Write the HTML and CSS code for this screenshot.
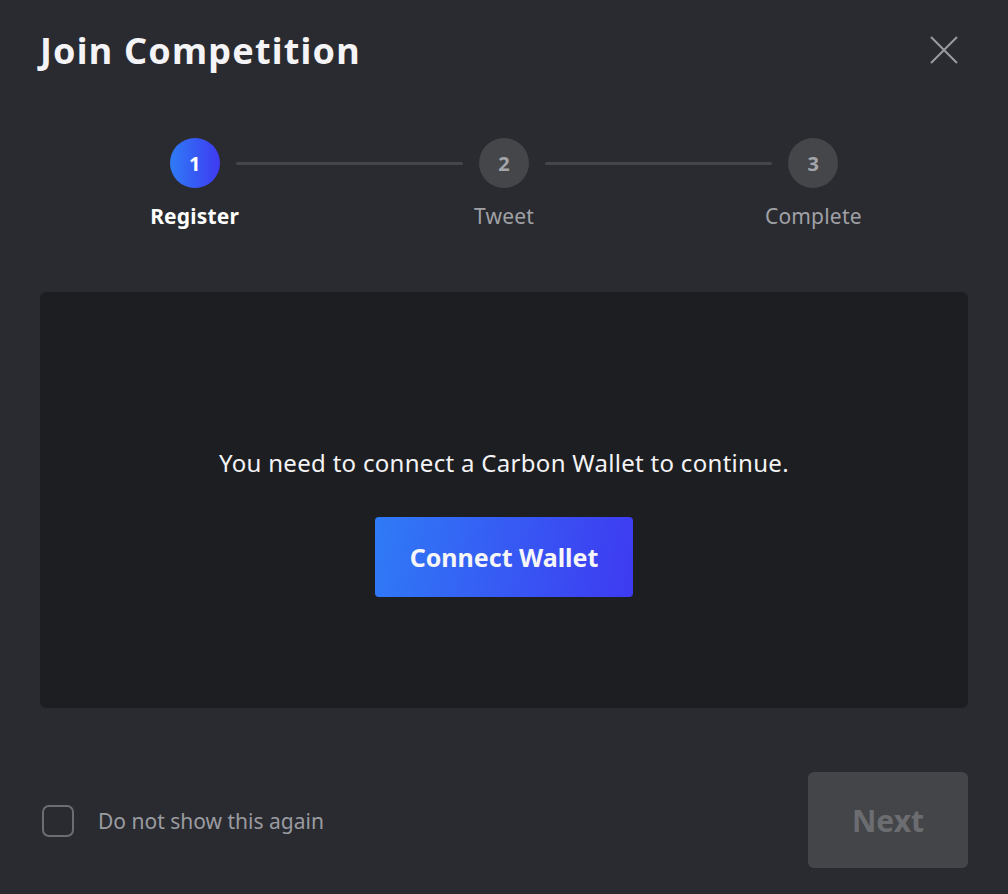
FILE: index.html
```html
<!DOCTYPE html>
<html lang="en">
<head>
<meta charset="utf-8">
<title>Join Competition</title>
<link rel="stylesheet" href="styles.css">
</head>
<body>
<div class="modal">
  <header class="header">
    <h1 class="title">Join Competition</h1>
    <button class="close" aria-label="Close">
      <svg width="28" height="28" viewBox="0 0 28 28"><path d="M1 1L27 27M27 1L1 27" stroke="#9a9ba0" stroke-width="2" fill="none"/></svg>
    </button>
  </header>
  <ol class="stepper">
    <li class="step active"><span class="dot">1</span><span class="label">Register</span></li>
    <li class="step"><span class="dot">2</span><span class="label">Tweet</span></li>
    <li class="step last"><span class="dot">3</span><span class="label">Complete</span></li>
  </ol>
  <section class="panel">
    <p class="msg">You need to connect a Carbon Wallet to continue.</p>
    <button class="connect">Connect Wallet</button>
  </section>
  <footer class="footer">
    <label class="check"><span class="box"></span><span class="check-text">Do not show this again</span></label>
    <button class="next" disabled>Next</button>
  </footer>
</div>
</body>
</html>
```
FILE: styles.css
```css
* { box-sizing: border-box; }
html, body { margin: 0; height: 100%; }
body {
  background: #2a2b30;
  font-family: "Noto Sans", "DejaVu Sans", sans-serif;
  color: #f4f4f6;
}
.modal {
  display: flex;
  flex-direction: column;
  padding: 24px 40px 26px;
  height: 894px;
}
.header {
  display: flex;
  align-items: center;
  justify-content: space-between;
  height: 52px;
}
.title {
  margin: 0;
  font-size: 36px;
  font-weight: 700;
  letter-spacing: 1.2px;
  color: #f4f4f6;
}
.close {
  background: none;
  border: 0;
  padding: 0;
  width: 28px;
  height: 28px;
  margin-right: 10px;
  cursor: pointer;
}
.close svg { display: block; }
.stepper {
  list-style: none;
  margin: 62px 0 0;
  padding: 0;
  display: grid;
  grid-template-columns: repeat(3, 1fr);
}
.step {
  position: relative;
  display: flex;
  flex-direction: column;
  align-items: center;
}
.step:not(.last)::after {
  content: "";
  position: absolute;
  top: 24px;
  left: calc(50% + 41px);
  right: calc(-50% + 41px);
  height: 3px;
  border-radius: 2px;
  background: #45464b;
}
.dot {
  width: 50px;
  height: 50px;
  border-radius: 50%;
  background: #45464a;
  color: #a4a5aa;
  display: flex;
  align-items: center;
  justify-content: center;
  font-weight: 700;
  font-size: 20px;
}
.active .dot {
  background: linear-gradient(90deg, #2f7bf6, #3e3af1);
  color: #fff;
}
.label {
  margin-top: 14px;
  font-size: 21px;
  line-height: 28px;
  letter-spacing: 0.2px;
  color: #a0a1a6;
}
.active .label { color: #fff; font-weight: 700; }
.panel {
  margin-top: 62px;
  height: 416px;
  background: #1d1e21;
  border-radius: 6px;
  display: flex;
  flex-direction: column;
  align-items: center;
  justify-content: center;
  padding-top: 44px;
}
.msg {
  margin: 0;
  font-size: 24px;
  line-height: 30px;
  letter-spacing: 0.3px;
  color: #f4f4f6;
}
.connect {
  margin-top: 39px;
  width: 258px;
  height: 80px;
  border: 0;
  border-radius: 4px;
  background: linear-gradient(100deg, #2f7bf6, #3e3af1);
  color: #f6f6f8;
  font-family: inherit;
  font-size: 25px;
  font-weight: 700;
  cursor: pointer;
}
.footer {
  margin-top: auto;
  display: flex;
  align-items: center;
  justify-content: space-between;
}
.check {
  display: flex;
  align-items: center;
  gap: 24px;
  padding-left: 2px;
  margin-top: 2px;
}
.box {
  width: 32px;
  height: 32px;
  border: 2px solid #6c6d72;
  border-radius: 7px;
}
.check-text {
  font-size: 21px;
  color: #9a9ba0;
}
.next {
  width: 160px;
  height: 96px;
  border: 0;
  border-radius: 6px;
  background: #444548;
  color: #6c6d71;
  font-family: inherit;
  font-size: 30px;
  font-weight: 700;
}
```
